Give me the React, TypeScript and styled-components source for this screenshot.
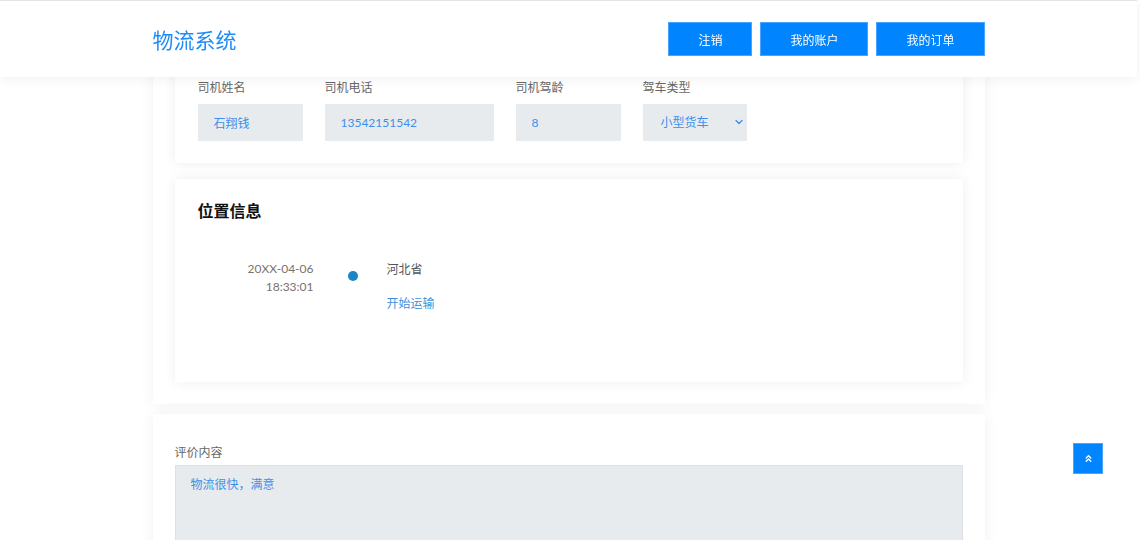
import React, { useLayoutEffect, useRef } from 'react';
import styled, { createGlobalStyle } from 'styled-components';
import { ChevronDown, ChevronsUp } from 'lucide-react';

const GlobalStyle = createGlobalStyle`
  html {
    overflow-y: scroll;
  }
  html::-webkit-scrollbar {
    width: 3px;
  }
  html::-webkit-scrollbar-track {
    background: #f1f1f1;
  }
  html::-webkit-scrollbar-thumb {
    background: #c1c1c1;
  }
  body {
    margin: 0;
    padding-right: 3px;
    background: #fff;
    font-family: Lato, "Noto Sans CJK SC", sans-serif;
    font-size: 12px;
    line-height: 18px;
    color: #666;
  }
  * {
    box-sizing: border-box;
  }
`;

const orderRows = [
  [
    { label: '订单编号', value: 'WL20XX040601', width: 169 },
    { label: '下单时间', value: '20XX-04-06 09:12:45', width: 169 },
    { label: '订单状态', value: '运输中', width: 105 },
  ],
  [
    { label: '发货人', value: '王建国', width: 105 },
    { label: '发货电话', value: '13831125678', width: 169 },
    { label: '发货地址', value: '河北省石家庄市长安区', width: 260 },
  ],
  [
    { label: '收货人', value: '李晓梅', width: 105 },
    { label: '收货电话', value: '13910087654', width: 169 },
    { label: '收货地址', value: '北京市朝阳区建国路', width: 260 },
  ],
  [
    { label: '货物名称', value: '日用百货', width: 105 },
    { label: '货物重量', value: '350kg', width: 105 },
    { label: '运费', value: '420元', width: 105 },
  ],
];

const driverFields = [
  { label: '司机姓名', value: '石翔钱', width: 105 },
  { label: '司机电话', value: '13542151542', width: 169 },
  { label: '司机驾龄', value: '8', width: 105 },
];

const App: React.FC = () => {
  const driverRow = useRef<HTMLDivElement>(null);

  useLayoutEffect(() => {
    const el = driverRow.current;
    if (!el) return;
    const top = el.getBoundingClientRect().top + window.scrollY;
    window.scrollTo(0, top - 79);
  }, []);

  return (
    <>
      <GlobalStyle />
      <Header>
        <HeaderInner>
          <Logo>物流系统</Logo>
          <Nav>
            <NavButton>注销</NavButton>
            <NavButton>我的账户</NavButton>
            <NavButton>我的订单</NavButton>
          </Nav>
        </HeaderInner>
      </Header>

      <Main>
        <Panel>
          <Card>
            <CardTitle>订单信息</CardTitle>
            {orderRows.map((row, i) => (
              <FieldRow key={i}>
                {row.map((f) => (
                  <Field key={f.label}>
                    <Label>{f.label}</Label>
                    <Input $width={f.width} readOnly value={f.value} />
                  </Field>
                ))}
              </FieldRow>
            ))}
            <Field>
              <Label>备注</Label>
              <Remark readOnly value="请尽快送达，易碎物品轻拿轻放" />
            </Field>
          </Card>

          <Card>
            <CardTitle>司机信息</CardTitle>
            <FieldRow ref={driverRow}>
              {driverFields.map((f) => (
                <Field key={f.label}>
                  <Label>{f.label}</Label>
                  <Input $width={f.width} readOnly value={f.value} />
                </Field>
              ))}
              <Field>
                <Label>驾车类型</Label>
                <SelectWrap>
                  <Select defaultValue="small">
                    <option value="small">小型货车</option>
                    <option value="medium">中型货车</option>
                    <option value="large">大型货车</option>
                  </Select>
                  <SelectArrow>
                    <ChevronDown size={12} strokeWidth={2.5} />
                  </SelectArrow>
                </SelectWrap>
              </Field>
            </FieldRow>
          </Card>

          <Card $bottom={69}>
            <CardTitle>位置信息</CardTitle>
            <Timeline>
              <TimelineItem>
                <TimeCol>
                  <div>20XX-04-06</div>
                  <div>18:33:01</div>
                </TimeCol>
                <Dot />
                <InfoCol>
                  <Place>河北省</Place>
                  <Status>开始运输</Status>
                </InfoCol>
              </TimelineItem>
            </Timeline>
          </Card>
        </Panel>

        <Panel $top={30}>
          <Label>评价内容</Label>
          <Comment readOnly value="物流很快，满意" />
          <RateRow>
            <Label>评价等级</Label>
            <Stars>★★★★★</Stars>
          </RateRow>
          <SubmitButton>提交评价</SubmitButton>
        </Panel>
      </Main>

      <Footer>© 物流系统 版权所有</Footer>

      <BackTop aria-label="返回顶部">
        <ChevronsUp size={11} strokeWidth={3} />
      </BackTop>
    </>
  );
};

export default App;

const Header = styled.header`
  position: fixed;
  top: 0;
  left: 0;
  right: 3px;
  z-index: 10;
  height: 77px;
  background: #fff;
  border-top: 1px solid #e4e4e4;
  box-shadow: 0 2px 12px rgba(0, 0, 0, 0.06);
`;

const HeaderInner = styled.div`
  width: 832px;
  height: 100%;
  margin: 0 auto;
  display: flex;
  align-items: center;
  justify-content: space-between;
`;

const Logo = styled.div`
  font-size: 21px;
  line-height: 28px;
  color: #1f8cf7;
  padding-top: 2px;
`;

const Nav = styled.nav`
  display: flex;
  gap: 8px;
`;

const NavButton = styled.button`
  height: 34px;
  padding: 0 29px;
  border: 1px solid #4aa3ff;
  background: #0084ff;
  color: #fff;
  font-family: inherit;
  font-size: 12px;
  cursor: pointer;
`;

const Main = styled.main`
  width: 832px;
  margin: 0 auto;
  padding-top: 97px;
  display: flex;
  flex-direction: column;
  gap: 10px;
`;

const Panel = styled.section<{ $top?: number }>`
  background: #fff;
  padding: ${(p) => p.$top ?? 22}px 22px 22px;
  box-shadow: 0 0 14px rgba(0, 0, 0, 0.06);
  display: flex;
  flex-direction: column;
  gap: 16px;

  & > label {
    margin-bottom: -13px;
  }
`;

const Card = styled.div<{ $bottom?: number }>`
  background: #fff;
  padding: 20px 23px ${(p) => p.$bottom ?? 22}px;
  box-shadow: 0 0 12px rgba(0, 0, 0, 0.07);
  display: flex;
  flex-direction: column;
  gap: 20px;
`;

const CardTitle = styled.h2`
  margin: 0;
  font-size: 16px;
  line-height: 24px;
  font-weight: 700;
  color: #111;
`;

const FieldRow = styled.div`
  display: flex;
  gap: 22px;
`;

const Field = styled.div`
  display: flex;
  flex-direction: column;
  gap: 7px;
`;

const Label = styled.label`
  font-size: 12px;
  line-height: 18px;
  color: #666;
`;

const Input = styled.input<{ $width: number }>`
  width: ${(p) => p.$width}px;
  height: 37px;
  padding: 0 16px;
  border: none;
  outline: none;
  background: #e8ebee;
  color: #3d8fea;
  font-family: inherit;
  font-size: 12px;
`;

const SelectWrap = styled.div`
  position: relative;
  width: 104px;
`;

const Select = styled.select`
  appearance: none;
  width: 100%;
  height: 37px;
  padding: 0 18px;
  border: none;
  outline: none;
  background: #e8ebee;
  color: #3d8fea;
  font-family: inherit;
  font-size: 12px;
`;

const SelectArrow = styled.span`
  position: absolute;
  right: 2px;
  top: 12px;
  color: #3d8fea;
  display: flex;
  pointer-events: none;
`;

const Remark = styled.textarea`
  width: 100%;
  height: 80px;
  padding: 12px 16px;
  border: none;
  outline: none;
  resize: none;
  background: #e8ebee;
  color: #3d8fea;
  font-family: inherit;
  font-size: 12px;
`;

const Timeline = styled.div`
  margin-top: 17px;
  display: flex;
  flex-direction: column;
`;

const TimelineItem = styled.div`
  display: flex;
  align-items: flex-start;
`;

const TimeCol = styled.div`
  width: 116px;
  text-align: right;
  color: #7a736e;
`;

const Dot = styled.span`
  width: 10px;
  height: 10px;
  margin: 11px 29px 0 34px;
  border-radius: 50%;
  background: #1b86c6;
`;

const InfoCol = styled.div`
  display: flex;
  flex-direction: column;
  gap: 16px;
  padding-top: 1px;
`;

const Place = styled.div`
  color: #555;
`;

const Status = styled.div`
  color: #3f8fdb;
`;

const Comment = styled.textarea`
  width: 100%;
  height: 170px;
  padding: 10px 15px;
  border: 1px solid #dde0e4;
  outline: none;
  resize: none;
  background: #e8ebee;
  color: #3d8fea;
  font-family: inherit;
  font-size: 12px;
  line-height: 18px;
`;

const RateRow = styled.div`
  display: flex;
  align-items: center;
  gap: 16px;
`;

const Stars = styled.span`
  font-size: 18px;
  color: #f5a623;
  letter-spacing: 2px;
`;

const SubmitButton = styled(NavButton)`
  align-self: flex-start;
  margin-bottom: 8px;
`;

const Footer = styled.footer`
  margin: 40px 0 0;
  padding: 40px 0 100px;
  text-align: center;
  color: #999;
`;

const BackTop = styled.button`
  position: fixed;
  right: 37px;
  bottom: 66px;
  width: 30px;
  height: 31px;
  padding: 0;
  border: 1px solid #4aa3ff;
  background: #0084ff;
  color: #fff;
  display: flex;
  align-items: center;
  justify-content: center;
  cursor: pointer;
`;
